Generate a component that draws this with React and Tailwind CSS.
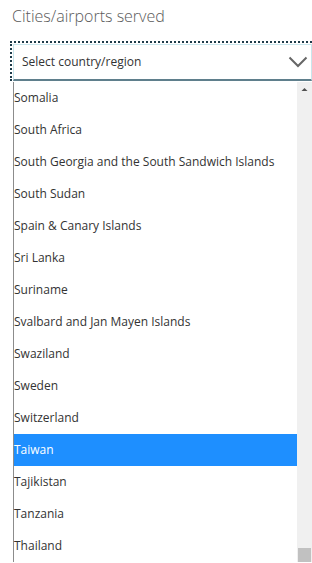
const countries = [
  "Somalia",
  "South Africa",
  "South Georgia and the South Sandwich Islands",
  "South Sudan",
  "Spain & Canary Islands",
  "Sri Lanka",
  "Suriname",
  "Svalbard and Jan Mayen Islands",
  "Swaziland",
  "Sweden",
  "Switzerland",
  "Taiwan",
  "Tajikistan",
  "Tanzania",
  "Thailand",
];

export default function App() {
  return (
    <div
      className="h-[563px] w-[312px] overflow-hidden bg-white"
      style={{ fontFamily: '"Open Sans", "Noto Sans", sans-serif' }}
    >
      {/* label */}
      <h2 className="pl-3 pt-[5px] text-[16px] font-light leading-[22px] text-[#5a5a5a]">
        Cities/airports served
      </h2>

      {/* select, focused */}
      <div className="ml-[10px] mt-[14px] border-l-2 border-t-2 border-dotted border-[#1d3b4a] pl-[1px] pt-[1px]">
        <div className="flex h-[37px] items-center justify-between border border-b-2 border-[#c9e6ec] border-b-[#5f7f8c] pl-2 pr-0">
          <span className="text-[12px] text-[#333]">Select country/region</span>
          <svg width="20" height="12" viewBox="0 0 20 12" className="mr-[3px]">
            <path d="M1.5 1.5 L10 10 L18.5 1.5" fill="none" stroke="#666" strokeWidth="2" />
          </svg>
        </div>
      </div>

      {/* dropdown list */}
      <div className="ml-[13px] mt-[1px] flex border-l border-[#8c8c8c]">
        <ul className="flex-1">
          {countries.map((c) => (
            <li
              key={c}
              className={`flex h-[32px] items-center text-[12px] ${
                c === "Taiwan" ? "bg-[#1e8fff] text-white" : "text-[#333]"
              }`}
            >
              {c}
            </li>
          ))}
        </ul>
        {/* scrollbar */}
        <div className="relative w-[15px] bg-[#f0f0f0]">
          <svg width="15" height="15" viewBox="0 0 15 15" className="absolute left-0 top-0">
            <path d="M4.5 9 L7.5 6 L10.5 9 Z" fill="#505050" />
          </svg>
          <div className="absolute bottom-0 left-[1px] h-[14px] w-[13px] bg-[#c1c1c1]" />
        </div>
      </div>
    </div>
  );
}
